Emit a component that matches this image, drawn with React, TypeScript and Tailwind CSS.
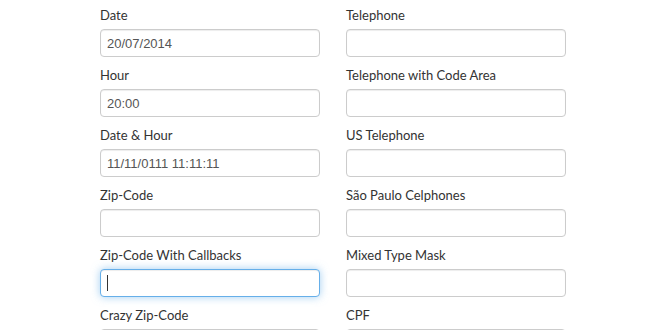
const LEFT = [
  { label: 'Date', value: '20/07/2014' },
  { label: 'Hour', value: '20:00' },
  { label: 'Date & Hour', value: '11/11/0111 11:11:11' },
  { label: 'Zip-Code', value: '' },
  { label: 'Zip-Code With Callbacks', value: '', focused: true },
  { label: 'Crazy Zip-Code', value: '' },
]

const RIGHT = [
  { label: 'Telephone', value: '' },
  { label: 'Telephone with Code Area', value: '' },
  { label: 'US Telephone', value: '' },
  { label: 'São Paulo Celphones', value: '' },
  { label: 'Mixed Type Mask', value: '' },
  { label: 'CPF', value: '' },
]

type Field = { label: string; value: string; focused?: boolean }

function FormField({ field }: { field: Field }) {
  return (
    <div className="flex flex-col">
      <label className="block h-5 leading-5 text-[13px] text-[#333]">{field.label}</label>
      <div
        className={
          field.focused
            ? 'mt-1 h-7 rounded-[4px] border border-[#66afe9] bg-white px-[6px] flex items-center shadow-[inset_0_1px_1px_rgba(0,0,0,0.075),0_0_8px_rgba(102,175,233,0.6)]'
            : 'mt-1 h-7 rounded-[4px] border border-[#ccc] bg-white px-[6px] flex items-center shadow-[inset_0_1px_1px_rgba(0,0,0,0.075)]'
        }
      >
        {field.focused ? (
          <span className="block w-px h-4 bg-[#333]" />
        ) : (
          <span
            className="text-[13px] text-[#555] leading-none"
            style={{ fontFamily: '"Liberation Sans", Arial, sans-serif' }}
          >
            {field.value}
          </span>
        )}
      </div>
    </div>
  )
}

export default function App() {
  return (
    <div
      className="w-[660px] h-[330px] overflow-hidden bg-white pt-[5px] pl-[100px]"
      style={{ fontFamily: 'Lato, "Noto Sans", sans-serif' }}
    >
      <div className="flex gap-[26px]">
        <div className="w-[220px] flex flex-col gap-2">
          {LEFT.map((f) => (
            <FormField key={f.label} field={f} />
          ))}
        </div>
        <div className="w-[220px] flex flex-col gap-2">
          {RIGHT.map((f) => (
            <FormField key={f.label} field={f} />
          ))}
        </div>
      </div>
    </div>
  )
}
